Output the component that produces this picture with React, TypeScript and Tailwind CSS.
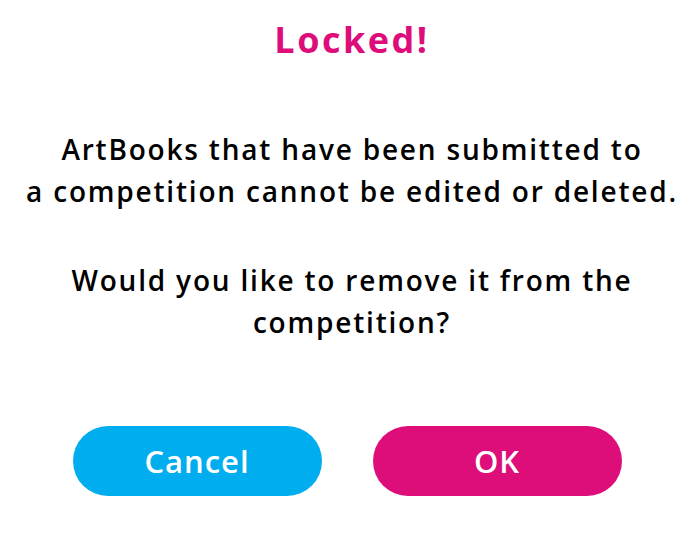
export default function App() {
  return (
    <div
      className="flex h-[536px] w-[698px] flex-col items-center bg-white text-center"
      style={{ fontFamily: '"Open Sans", "DejaVu Sans", sans-serif' }}
    >
      <h1 className="mt-[16px] ml-[6px] text-[36px] font-bold leading-[48px] tracking-[2.5px] text-[#dd0d7a]">Locked!</h1>

      <p className="mt-[64px] ml-[6px] text-[28px] font-semibold leading-[42px] tracking-[1.8px] text-black">
        ArtBooks that have been submitted to
        <br />
        a competition cannot be edited or deleted.
      </p>

      <p className="mt-[47px] ml-[6px] text-[28px] font-semibold leading-[42px] tracking-[1.8px] text-black">
        Would you like to remove it from the
        <br />
        competition?
      </p>

      <div className="mt-[83px] mr-[4px] flex gap-[51px]">
        <button className="h-[70px] w-[249px] rounded-full bg-[#00aeef] text-[31px] font-semibold tracking-[1px] text-white">
          Cancel
        </button>
        <button className="h-[70px] w-[249px] rounded-full bg-[#dd0d7a] text-[31px] font-semibold tracking-[1px] text-white">
          OK
        </button>
      </div>
    </div>
  );
}
